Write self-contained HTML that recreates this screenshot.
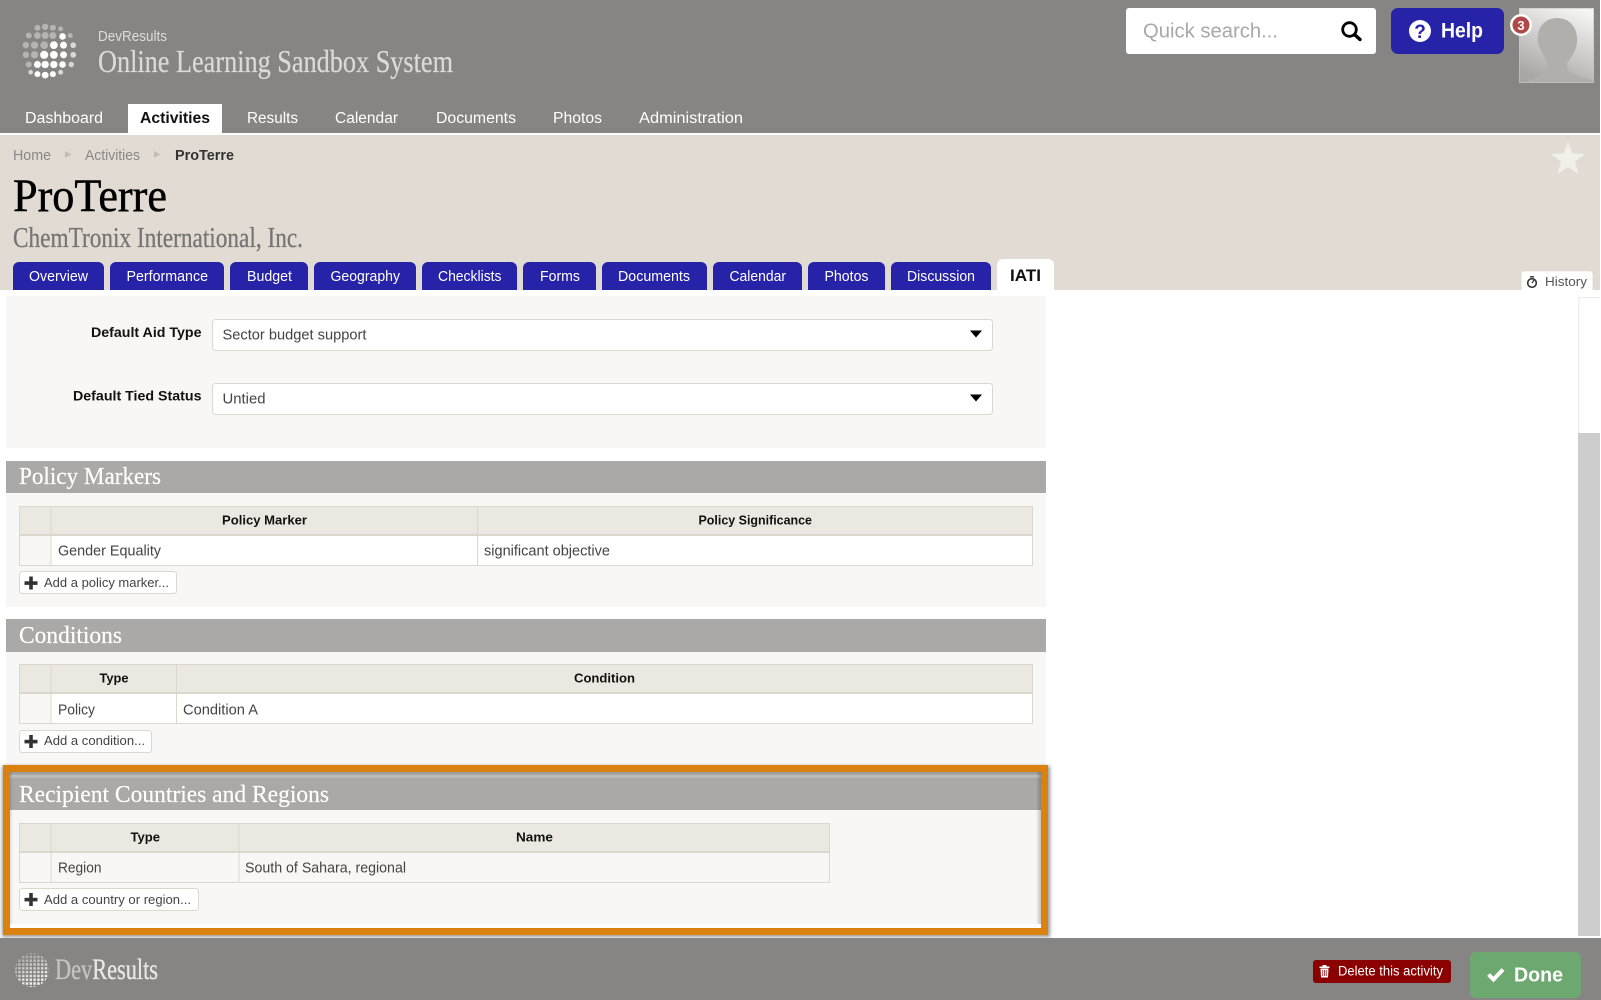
<!DOCTYPE html>
<html lang="en">
<head>
<meta charset="utf-8">
<title>ProTerre - DevResults</title>
<style>
html,body{margin:0;padding:0;background:#fff;width:1601px;height:1000px;overflow:hidden}
svg{display:block;position:absolute;left:0;top:0}
text{font-family:"Liberation Sans",sans-serif;white-space:pre}
.f{font-family:"Liberation Serif",serif}
.b{font-weight:700}
</style>
</head>
<body>
<svg width="1601" height="1000" viewBox="0 0 1601 1000" xmlns="http://www.w3.org/2000/svg">
<defs>
<linearGradient id="av" x1="0.8" y1="0" x2="0.4" y2="1"><stop offset="0" stop-color="#f6f6f5"/><stop offset="1" stop-color="#a8a7a4"/></linearGradient>
<linearGradient id="band" x1="0" y1="0" x2="0" y2="1"><stop offset="0" stop-color="#989896"/><stop offset=".45" stop-color="#a8a8a6"/><stop offset=".6" stop-color="#c2c2c0"/><stop offset="1" stop-color="#b4b3b1"/></linearGradient>
<linearGradient id="rs" x1="0" y1="0" x2="1" y2="0"><stop offset="0" stop-color="#000" stop-opacity="0"/><stop offset="1" stop-color="#000" stop-opacity=".22"/></linearGradient>
<linearGradient id="ls" x1="0" y1="0" x2="1" y2="0"><stop offset="0" stop-color="#000" stop-opacity=".12"/><stop offset="1" stop-color="#000" stop-opacity="0"/></linearGradient>
<linearGradient id="fg" x1="0.2" y1="0" x2="0.6" y2="1"><stop offset="0" stop-color="#a3a2a0"/><stop offset=".55" stop-color="#d6d6d5"/><stop offset="1" stop-color="#fff"/></linearGradient>
<clipPath id="fc"><circle cx="32" cy="970" r="17"/></clipPath>
<filter id="sh" x="-5%" y="-5%" width="110%" height="110%"><feGaussianBlur stdDeviation="1.8"/></filter>
<symbol id="globe" viewBox="20 20 60 60">
<g fill="#b5b4b2">
<circle cx="37" cy="27" r="3.100"/><circle cx="45" cy="26" r="3.300"/><circle cx="53" cy="27" r="3.100"/><circle cx="61" cy="28" r="2.600"/>
<circle cx="28" cy="35" r="3.100"/><circle cx="37" cy="35" r="3.500"/><circle cx="45" cy="35" r="3.600"/><circle cx="53" cy="35" r="3.600"/>
<circle cx="25" cy="45" r="3.300"/><circle cx="34" cy="45" r="3.800"/><circle cx="44" cy="45" r="4"/>
<circle cx="25" cy="55" r="3.300"/><circle cx="34" cy="55" r="3.800"/>
<circle cx="28" cy="65" r="3.100"/>
<circle cx="71" cy="35" r="2.600"/>
</g>
<g fill="#fff">
<circle cx="63" cy="36" r="3.400"/>
<circle cx="54" cy="45" r="4"/><circle cx="64" cy="45" r="3.600"/>
<circle cx="44" cy="55" r="4.200"/><circle cx="54" cy="55" r="4"/><circle cx="64" cy="55" r="3.600"/>
<circle cx="37" cy="65" r="3.600"/><circle cx="45" cy="65" r="3.800"/><circle cx="54" cy="65" r="3.800"/><circle cx="63" cy="65" r="3.400"/>
<circle cx="37" cy="75" r="3.100"/><circle cx="45" cy="76" r="3.500"/><circle cx="53" cy="75" r="3.100"/>
</g>
<g fill="#d8d7d6">
<circle cx="74" cy="45" r="3"/><circle cx="74" cy="55" r="3"/><circle cx="72" cy="65" r="2.800"/>
<circle cx="30" cy="73" r="2.400"/><circle cx="61" cy="73" r="2.600"/>
</g>
</symbol>
</defs>

<!-- page chrome -->
<rect x="0" y="0" width="1600" height="133" fill="#878583"/>
<rect x="0" y="133" width="1601" height="2" fill="#fff"/>
<rect x="0" y="135" width="1600" height="155" fill="#e2dbd4"/>

<!-- logo + system name -->
<use href="#globe" x="21" y="21" width="58" height="58"/>
<text x="98" y="41" font-size="14.500" fill="#dcdcdc" textLength="69" lengthAdjust="spacingAndGlyphs">DevResults</text>
<text class="f" x="98" y="72" font-size="32" fill="#dadad8" stroke="#dadad8" stroke-width=".25" textLength="355" lengthAdjust="spacingAndGlyphs">Online Learning Sandbox System</text>

<!-- main nav -->
<rect x="128" y="104" width="94" height="31" fill="#fff"/>
<g font-size="15.500" fill="#fff">
<text x="25" y="123" textLength="78" lengthAdjust="spacingAndGlyphs">Dashboard</text>
<text class="b" x="140" y="123" fill="#111" textLength="70" lengthAdjust="spacingAndGlyphs">Activities</text>
<text x="247" y="123" textLength="51" lengthAdjust="spacingAndGlyphs">Results</text>
<text x="335" y="123" textLength="63" lengthAdjust="spacingAndGlyphs">Calendar</text>
<text x="436" y="123" textLength="80" lengthAdjust="spacingAndGlyphs">Documents</text>
<text x="553" y="123" textLength="49" lengthAdjust="spacingAndGlyphs">Photos</text>
<text x="639" y="123" textLength="104" lengthAdjust="spacingAndGlyphs">Administration</text>
</g>

<!-- search -->
<rect x="1126" y="8" width="250" height="46" rx="3" fill="#fff"/>
<text x="1143" y="37.500" font-size="20.500" fill="#a8a8a8" textLength="135" lengthAdjust="spacingAndGlyphs">Quick search...</text>
<circle cx="1349.500" cy="29.500" r="6.800" fill="none" stroke="#000" stroke-width="2.800"/>
<line x1="1354.500" y1="34.500" x2="1360" y2="39.500" stroke="#000" stroke-width="3.400" stroke-linecap="round"/>

<!-- help -->
<rect x="1391" y="8" width="113" height="46" rx="7" fill="#2723a9"/>
<circle cx="1420" cy="31" r="11" fill="#fff"/>
<text class="b" x="1420" y="38" font-size="19" fill="#2723a9" text-anchor="middle">?</text>
<text class="b" x="1441" y="37.500" font-size="21.500" fill="#fff" textLength="42" lengthAdjust="spacingAndGlyphs">Help</text>

<!-- avatar -->
<rect x="1519" y="8" width="75" height="75" fill="url(#av)"/>
<path d="M1525 83C1535 77 1548 75 1548 66C1548 60 1540 52 1538 42C1536 28 1545 18 1557 18C1570 18 1578 28 1577 42C1576 54 1567 60 1567 66C1567 74 1580 76 1594 81L1594 83Z" fill="#b0afac"/>
<rect x="1519.500" y="8.500" width="74" height="74" fill="none" stroke="#c8c7c5" stroke-opacity=".6"/>
<circle cx="1521" cy="25" r="11" fill="#fff"/>
<circle cx="1521" cy="25" r="8.500" fill="#b04848"/>
<text class="b" x="1521" y="30" font-size="13" fill="#fff" text-anchor="middle">3</text>

<!-- breadcrumb -->
<text x="13" y="160" font-size="14.500" fill="#898785" textLength="38" lengthAdjust="spacingAndGlyphs">Home</text>
<polygon points="65,151 71.500,154.500 65,158" fill="#c4bdb5"/>
<text x="85" y="160" font-size="14.500" fill="#898785" textLength="55" lengthAdjust="spacingAndGlyphs">Activities</text>
<polygon points="154,151 160.500,154.500 154,158" fill="#c4bdb5"/>
<text class="b" x="175" y="160" font-size="14.500" fill="#333" textLength="59" lengthAdjust="spacingAndGlyphs">ProTerre</text>

<polygon points="1568,142 1572.500,153.500 1585,154 1575,161.500 1578.500,174 1568,167 1557.500,174 1561,161.500 1551,154 1563.500,153.500" fill="#f1efea"/>

<!-- title -->
<text class="f" x="13" y="211" font-size="47" fill="#000" stroke="#000" stroke-width=".5" textLength="154" lengthAdjust="spacingAndGlyphs">ProTerre</text>
<text class="f" x="13" y="247" font-size="29" fill="#777573" stroke="#777573" stroke-width=".3" textLength="290" lengthAdjust="spacingAndGlyphs">ChemTronix International, Inc.</text>

<!-- tabs -->
<g fill="#2723a9">
<rect x="13" y="262" width="91" height="34" rx="6"/>
<rect x="110" y="262" width="114" height="34" rx="6"/>
<rect x="230" y="262" width="78" height="34" rx="6"/>
<rect x="314" y="262" width="102" height="34" rx="6"/>
<rect x="422" y="262" width="95" height="34" rx="6"/>
<rect x="523" y="262" width="73" height="34" rx="6"/>
<rect x="602" y="262" width="105" height="34" rx="6"/>
<rect x="713" y="262" width="89" height="34" rx="6"/>
<rect x="808" y="262" width="77" height="34" rx="6"/>
<rect x="891" y="262" width="100" height="34" rx="6"/>
</g>
<rect x="997" y="259" width="57" height="38" rx="6" fill="#fff"/>
<rect x="1521" y="271" width="72" height="26" rx="3" fill="#fff" stroke="#d9d3c7" stroke-width=".6"/>

<!-- content background -->
<rect x="0" y="290" width="1601" height="648" fill="#fff"/>
<g font-size="14.500" fill="#fff">
<text x="29" y="281" textLength="59" lengthAdjust="spacingAndGlyphs">Overview</text>
<text x="126.500" y="281" textLength="81.500" lengthAdjust="spacingAndGlyphs">Performance</text>
<text x="247" y="281" textLength="45" lengthAdjust="spacingAndGlyphs">Budget</text>
<text x="330.500" y="281" textLength="69.500" lengthAdjust="spacingAndGlyphs">Geography</text>
<text x="438" y="281" textLength="63.500" lengthAdjust="spacingAndGlyphs">Checklists</text>
<text x="540" y="281" textLength="40" lengthAdjust="spacingAndGlyphs">Forms</text>
<text x="618" y="281" textLength="72" lengthAdjust="spacingAndGlyphs">Documents</text>
<text x="729.500" y="281" textLength="56.500" lengthAdjust="spacingAndGlyphs">Calendar</text>
<text x="824.500" y="281" textLength="44" lengthAdjust="spacingAndGlyphs">Photos</text>
<text x="907" y="281" textLength="68" lengthAdjust="spacingAndGlyphs">Discussion</text>
</g>
<text class="b" x="1010" y="281" font-size="16.500" fill="#111" textLength="31" lengthAdjust="spacingAndGlyphs">IATI</text>

<!-- history -->
<circle cx="1532" cy="283" r="4.300" fill="none" stroke="#333" stroke-width="1.600"/>
<line x1="1530" y1="276.800" x2="1534" y2="276.800" stroke="#333" stroke-width="1.400"/>
<line x1="1532" y1="283" x2="1534" y2="280" stroke="#333" stroke-width="1.200"/>
<text x="1545" y="286" font-size="13" fill="#555" textLength="42" lengthAdjust="spacingAndGlyphs">History</text>

<!-- scrollbar -->
<rect x="1578" y="297" width="22" height="136" fill="#fff"/>
<rect x="1578" y="297" width="1.500" height="136" fill="#ececea"/>
<rect x="1578" y="297" width="22" height="1" fill="#ececea"/>
<rect x="1578" y="433" width="22" height="503" fill="#cdcdcd"/>

<!-- defaults panel -->
<rect x="6" y="296" width="1040" height="152" fill="#f8f7f5"/>
<text class="b" x="91" y="337" font-size="14" fill="#111" textLength="110.500" lengthAdjust="spacingAndGlyphs">Default Aid Type</text>
<rect x="212.500" y="319.500" width="780" height="31" rx="3" fill="#fff" stroke="#dcd7cc"/>
<text x="222.500" y="339.500" font-size="14.500" fill="#444" textLength="144" lengthAdjust="spacingAndGlyphs">Sector budget support</text>
<polygon points="970,330.500 982,330.500 976,337.500" fill="#000"/>
<text class="b" x="73" y="400.500" font-size="14" fill="#111" textLength="128.500" lengthAdjust="spacingAndGlyphs">Default Tied Status</text>
<rect x="212.500" y="383.500" width="780" height="31" rx="3" fill="#fff" stroke="#dcd7cc"/>
<text x="222.500" y="403.500" font-size="14.500" fill="#444" textLength="43" lengthAdjust="spacingAndGlyphs">Untied</text>
<polygon points="970,394.500 982,394.500 976,401.500" fill="#000"/>

<!-- Policy markers -->
<rect x="6" y="461" width="1040" height="146" fill="#f8f7f5"/>
<rect x="6" y="461" width="1040" height="32" fill="#aba9a7"/>
<text class="f" x="19" y="484" font-size="24" fill="#fff" stroke="#fff" stroke-width=".2" textLength="142" lengthAdjust="spacingAndGlyphs">Policy Markers</text>
<rect x="19.500" y="506.500" width="1013" height="59" fill="#fff" stroke="#dcd7cc"/>
<rect x="20" y="507" width="1012" height="28" fill="#ebe8e1"/>
<rect x="20" y="535" width="31" height="30" fill="#f8f7f5"/>
<rect x="20" y="534" width="1012" height="2" fill="#dcd7cc"/>
<rect x="50.500" y="507" width="1" height="58" fill="#dcd7cc"/>
<rect x="477" y="507" width="1" height="58" fill="#dcd7cc"/>
<text class="b" x="222" y="524.500" font-size="13" fill="#111" textLength="85" lengthAdjust="spacingAndGlyphs">Policy Marker</text>
<text class="b" x="698.500" y="524.500" font-size="13" fill="#111" textLength="113.500" lengthAdjust="spacingAndGlyphs">Policy Significance</text>
<text x="58" y="555.500" font-size="14.500" fill="#444" textLength="103" lengthAdjust="spacingAndGlyphs">Gender Equality</text>
<text x="484" y="555.500" font-size="14.500" fill="#444" textLength="126" lengthAdjust="spacingAndGlyphs">significant objective</text>
<rect x="19.500" y="571.500" width="157" height="22" rx="3" fill="#fff" stroke="#dcd7cc"/>
<rect x="24.500" y="581.300" width="13" height="3.600" fill="#333"/><rect x="29.200" y="576.500" width="3.600" height="13" fill="#333"/>
<text x="44" y="587" font-size="12.500" fill="#444" textLength="125" lengthAdjust="spacingAndGlyphs">Add a policy marker...</text>

<!-- Conditions -->
<rect x="6" y="619" width="1040" height="150" fill="#f8f7f5"/>
<rect x="6" y="619" width="1040" height="33" fill="#aba9a7"/>
<text class="f" x="19" y="643" font-size="24" fill="#fff" stroke="#fff" stroke-width=".2" textLength="103" lengthAdjust="spacingAndGlyphs">Conditions</text>
<rect x="19.500" y="664.500" width="1013" height="59" fill="#fff" stroke="#dcd7cc"/>
<rect x="20" y="665" width="1012" height="28" fill="#ebe8e1"/>
<rect x="20" y="693" width="31" height="30" fill="#f8f7f5"/>
<rect x="20" y="692" width="1012" height="2" fill="#dcd7cc"/>
<rect x="50.500" y="665" width="1" height="58" fill="#dcd7cc"/>
<rect x="176" y="665" width="1" height="58" fill="#dcd7cc"/>
<text class="b" x="99.500" y="682.500" font-size="13" fill="#111" textLength="29" lengthAdjust="spacingAndGlyphs">Type</text>
<text class="b" x="574" y="682.500" font-size="13" fill="#111" textLength="61" lengthAdjust="spacingAndGlyphs">Condition</text>
<text x="58" y="714.500" font-size="14.500" fill="#444" textLength="37" lengthAdjust="spacingAndGlyphs">Policy</text>
<text x="183" y="714.500" font-size="14.500" fill="#444" textLength="75" lengthAdjust="spacingAndGlyphs">Condition A</text>
<rect x="19.500" y="730.500" width="132" height="22" rx="3" fill="#fff" stroke="#dcd7cc"/>
<rect x="24.500" y="739.800" width="13" height="3.600" fill="#333"/><rect x="29.200" y="735" width="3.600" height="13" fill="#333"/>
<text x="44" y="745" font-size="12.500" fill="#444" textLength="101" lengthAdjust="spacingAndGlyphs">Add a condition...</text>

<!-- Recipient (highlighted) -->
<rect x="2" y="766" width="1048" height="171" fill="#444" opacity=".55" filter="url(#sh)"/>
<rect x="3" y="765" width="1045" height="170" fill="#d9820f"/>
<rect x="10" y="772" width="1031" height="156" fill="#fff"/>
<rect x="10" y="772" width="1031" height="152" fill="#f8f7f5"/>
<rect x="10" y="772" width="1031" height="6" fill="url(#band)"/>
<rect x="10" y="778" width="1031" height="32" fill="#aba9a7"/>
<rect x="1036" y="772" width="5" height="152" fill="url(#rs)"/>
<rect x="10" y="772" width="3" height="152" fill="url(#ls)"/>
<text class="f" x="19" y="802" font-size="24" fill="#fff" stroke="#fff" stroke-width=".2" textLength="310" lengthAdjust="spacingAndGlyphs">Recipient Countries and Regions</text>
<rect x="19.500" y="823.500" width="810" height="59" fill="#f8f7f5" stroke="#dcd7cc"/>
<rect x="20" y="824" width="809" height="28" fill="#ebe8e1"/>
<rect x="20" y="851" width="809" height="2" fill="#dcd7cc"/>
<rect x="50.500" y="824" width="1" height="58" fill="#dcd7cc"/>
<rect x="238.500" y="824" width="1" height="58" fill="#dcd7cc"/>
<text class="b" x="130.500" y="841.500" font-size="13" fill="#111" textLength="29.500" lengthAdjust="spacingAndGlyphs">Type</text>
<text class="b" x="516" y="841.500" font-size="13" fill="#111" textLength="37" lengthAdjust="spacingAndGlyphs">Name</text>
<text x="58" y="872.500" font-size="14.500" fill="#444" textLength="43.500" lengthAdjust="spacingAndGlyphs">Region</text>
<text x="245" y="872.500" font-size="14.500" fill="#444" textLength="161" lengthAdjust="spacingAndGlyphs">South of Sahara, regional</text>
<rect x="19.500" y="888.500" width="179" height="22" rx="3" fill="#fff" stroke="#dcd7cc"/>
<rect x="24.500" y="897.800" width="13" height="3.600" fill="#333"/><rect x="29.200" y="893" width="3.600" height="13" fill="#333"/>
<text x="44" y="904" font-size="12.500" fill="#444" textLength="147" lengthAdjust="spacingAndGlyphs">Add a country or region...</text>

<!-- footer -->
<rect x="0" y="938" width="1601" height="62" fill="#878583"/>
<g clip-path="url(#fc)">
<circle cx="32" cy="970" r="17" fill="url(#fg)"/>
<g stroke="#878583" stroke-width="1.400">
<path d="M17.500 952V988M21.300 952V988M25.100 952V988M28.900 952V988M32.700 952V988M36.500 952V988M40.300 952V988M44.100 952V988M47.900 952V988"/>
<path d="M14 955H50M14 958.800H50M14 962.600H50M14 966.400H50M14 970.200H50M14 974H50M14 977.800H50M14 981.600H50M14 985.400H50"/>
</g>
</g>
<text class="f" x="55" y="979" font-size="30" fill="#c4c3c1" stroke="#c4c3c1" stroke-width=".35" textLength="103" lengthAdjust="spacingAndGlyphs">Dev<tspan fill="#e8e8e7" stroke="#e8e8e7">Results</tspan></text>

<rect x="1313" y="960" width="138" height="23" rx="3" fill="#8b0000"/>
<path d="M1319.500 966.500H1329.500V968H1319.500ZM1322.500 966.500V965H1326.500V966.500ZM1320.500 968.500H1328.500L1328 977.500H1321Z" fill="#fff"/>
<path d="M1322.800 970V976M1324.500 970V976M1326.200 970V976" stroke="#8b0000" stroke-width=".7"/>
<text x="1338" y="975.500" font-size="13.500" fill="#fff" textLength="105" lengthAdjust="spacingAndGlyphs">Delete this activity</text>

<rect x="1470" y="952" width="111" height="46" rx="6" fill="#6ca86f"/>
<polyline points="1488.500,974.500 1493.500,979.500 1503,969.500" fill="none" stroke="#fff" stroke-width="4"/>
<text class="b" x="1514" y="981.500" font-size="20.500" fill="#fff" textLength="49" lengthAdjust="spacingAndGlyphs">Done</text>
</svg>
</body>
</html>
